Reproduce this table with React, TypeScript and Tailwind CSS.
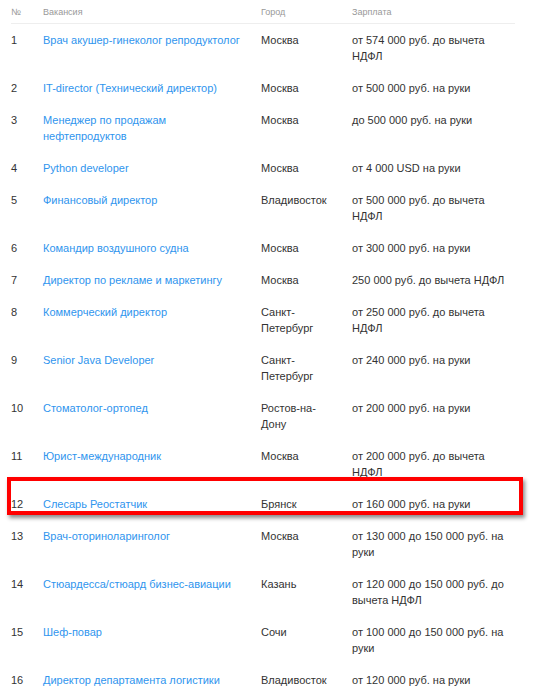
const rows: { n: number; title: string; city: string; salary: string }[] = [
  { n: 1, title: "Врач акушер-гинеколог репродуктолог", city: "Москва", salary: "от 574 000 руб. до вычета НДФЛ" },
  { n: 2, title: "IT-director (Технический директор)", city: "Москва", salary: "от 500 000 руб. на руки" },
  { n: 3, title: "Менеджер по продажам нефтепродуктов", city: "Москва", salary: "до 500 000 руб. на руки" },
  { n: 4, title: "Python developer", city: "Москва", salary: "от 4 000 USD на руки" },
  { n: 5, title: "Финансовый директор", city: "Владивосток", salary: "от 500 000 руб. до вычета НДФЛ" },
  { n: 6, title: "Командир воздушного судна", city: "Москва", salary: "от 300 000 руб. на руки" },
  { n: 7, title: "Директор по рекламе и маркетингу", city: "Москва", salary: "250 000 руб. до вычета НДФЛ" },
  { n: 8, title: "Коммерческий директор", city: "Санкт-Петербург", salary: "от 250 000 руб. до вычета НДФЛ" },
  { n: 9, title: "Senior Java Developer", city: "Санкт-Петербург", salary: "от 240 000 руб. на руки" },
  { n: 10, title: "Стоматолог-ортопед", city: "Ростов-на-Дону", salary: "от 200 000 руб. на руки" },
  { n: 11, title: "Юрист-международник", city: "Москва", salary: "от 200 000 руб. до вычета НДФЛ" },
  { n: 12, title: "Слесарь Реостатчик", city: "Брянск", salary: "от 160 000 руб. на руки" },
  { n: 13, title: "Врач-оториноларинголог", city: "Москва", salary: "от 130 000 до 150 000 руб. на руки" },
  { n: 14, title: "Стюардесса/стюард бизнес-авиации", city: "Казань", salary: "от 120 000 до 150 000 руб. до вычета НДФЛ" },
  { n: 15, title: "Шеф-повар", city: "Сочи", salary: "от 100 000 до 150 000 руб. на руки" },
  { n: 16, title: "Директор департамента логистики", city: "Владивосток", salary: "от 120 000 руб. на руки" },
];

const cols = "grid grid-cols-[32px_218px_91px_163px]";

export default function App() {
  return (
    <div className="min-h-[694px] bg-white pl-[11px] font-['Liberation_Sans',Arial,sans-serif] text-[11px] leading-[16px] text-[#333]">
      <div className="w-[504px]">
        <div className={`${cols} h-[24px] items-center border-b border-[#eeeeee] text-[9px] text-[#999]`}>
          <div>№</div>
          <div>Вакансия</div>
          <div>Город</div>
          <div>Зарплата</div>
        </div>
        {rows.map((r) => (
          <div key={r.n} className={`${cols} relative py-[8px]`}>
            <div>{r.n}</div>
            <div className="pr-[10px]">
              <a href="#" className="text-[#2f95ee]">{r.title}</a>
            </div>
            <div className="pr-[12px]">{r.city}</div>
            <div className="pr-[4px]">{r.salary}</div>
            {r.n === 12 && (
              <div className="pointer-events-none absolute left-[-4px] top-[-11px] h-[38px] w-[516px] border-[4px] border-[#ff0000] shadow-[2px_3px_4px_rgba(0,0,0,0.45)]" />
            )}
          </div>
        ))}
      </div>
    </div>
  );
}
